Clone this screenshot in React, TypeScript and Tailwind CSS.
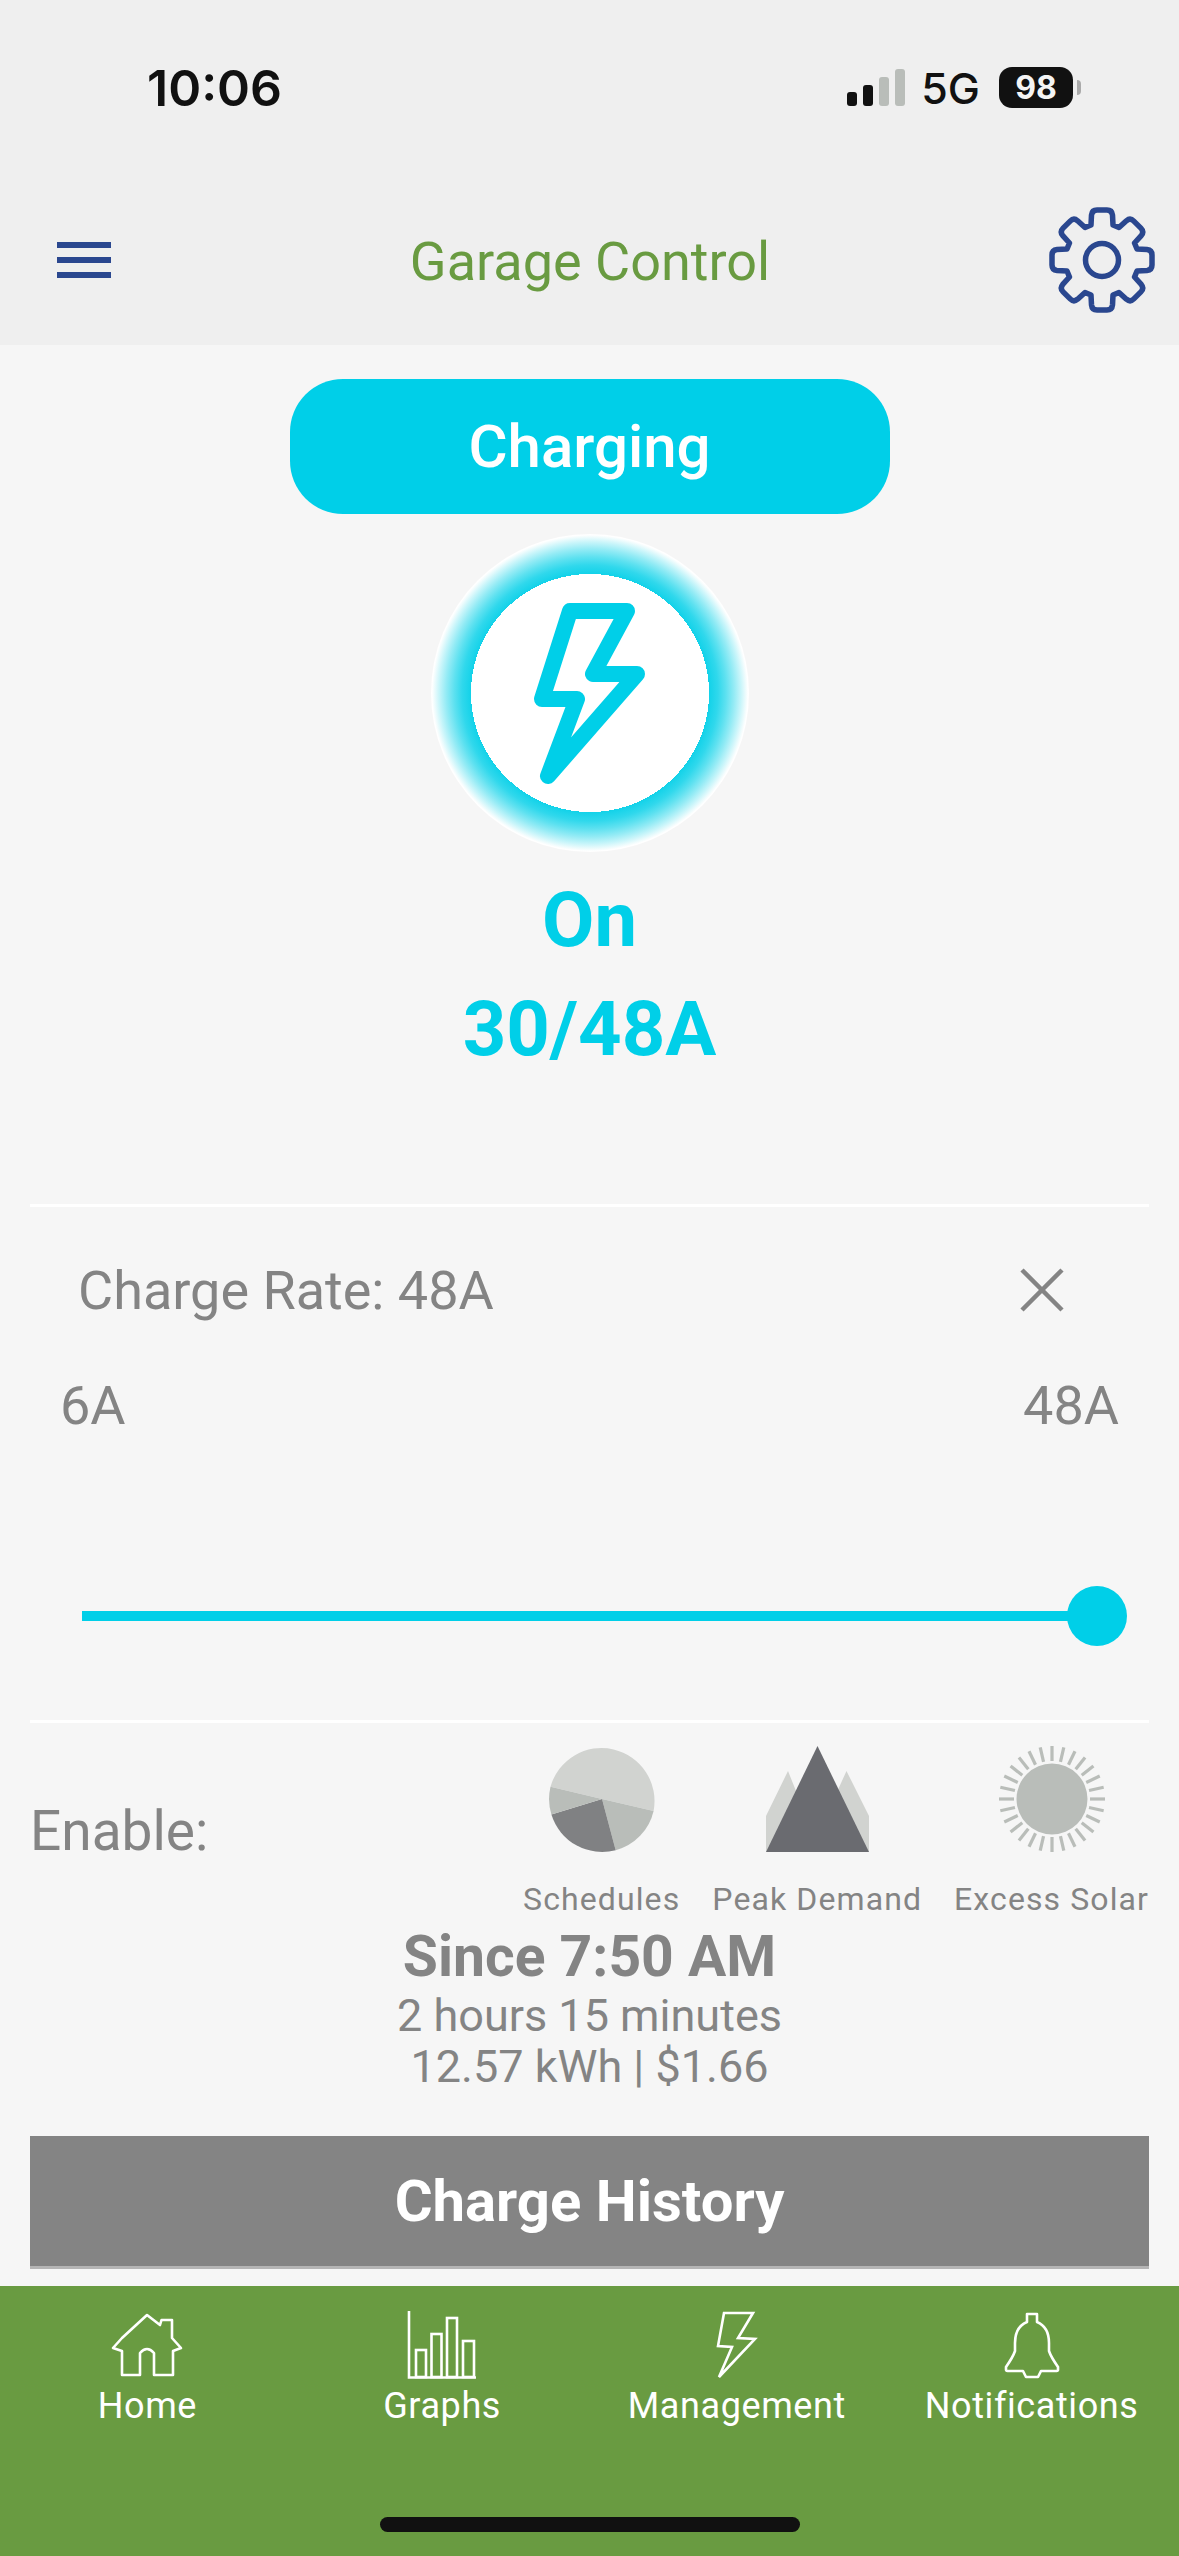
import { Fragment } from "react"

const gearPath = () => {
  const cx = 55
  const cy = 55
  let d = ""
  for (let i = 0; i < 8; i++) {
    const a = (i * Math.PI) / 4
    const pt = (x: number, y: number) => {
      const px = cx + x * Math.cos(a) - y * Math.sin(a)
      const py = cy + x * Math.sin(a) + y * Math.cos(a)
      return `${px.toFixed(2)} ${py.toFixed(2)}`
    }
    d += `${i === 0 ? "M" : "L"}${pt(-11, -35)} L${pt(-10.5, -45)} Q${pt(-10, -50)} ${pt(-5, -50)} L${pt(5, -50)} Q${pt(10, -50)} ${pt(10.5, -45)} L${pt(11, -35)} `
  }
  return d + "Z"
}

const sunRays = Array.from({ length: 28 }, (_, i) => (i * 360) / 28)

const Gear = () => (
  <svg width="110" height="110" viewBox="0 0 110 110" fill="none" stroke="#2a478f" strokeWidth="5.5" strokeLinejoin="round">
    <path d={gearPath()} />
    <circle cx="55" cy="55" r="16.5" />
  </svg>
)

const Pie = () => (
  <svg width="106" height="106" viewBox="-53 -53 106 106">
    <path d="M0 0L-51.5 -12.3A53 53 0 0 1 51.6 11.9Z" fill="#d1d3d0" />
    <path d="M0 0L51.6 11.9A53 53 0 0 1 13.7 51.2Z" fill="#b9bdb9" />
    <path d="M0 0L13.7 51.2A53 53 0 0 1 -50.6 15.6Z" fill="#808183" />
    <path d="M0 0L-50.6 15.6A53 53 0 0 1 -51.5 -12.3Z" fill="#b9bdb9" />
  </svg>
)

const Mountain = () => (
  <svg width="103" height="106" viewBox="0 0 103 106">
    <path d="M22 25L0 70V106H103V70L80.5 25L60 70H40Z" fill="#d1d3d0" />
    <path d="M51.5 0L0 106H103Z" fill="#6a6b70" />
  </svg>
)

const Sun = () => (
  <svg width="106" height="106" viewBox="-53 -53 106 106">
    <circle r="35.5" fill="#b9bdb9" />
    {sunRays.map((deg) => (
      <line key={deg} x1="0" y1="-38" x2="0" y2="-53" stroke="#b9bdb9" strokeWidth="3.2" transform={`rotate(${deg})`} />
    ))}
  </svg>
)

const tabs = [
  {
    label: "Home",
    icon: (
      <svg width="72" height="68" viewBox="-2 -2 72 66" fill="none" stroke="#fff" strokeWidth="2.6" strokeLinejoin="round">
        <path d="M34 1L47 11L48.5 6H59V24L68 34L60 37V61H41V39Q34 31 27 39V61H9V37L0 34L9 24Z" />
      </svg>
    ),
  },
  {
    label: "Graphs",
    icon: (
      <svg width="72" height="68" viewBox="0 0 72 68" fill="none" stroke="#fff" strokeWidth="2.6">
        <path d="M3 0V66.5H70" />
        <rect x="10" y="39" width="10" height="27" />
        <rect x="25.5" y="23" width="10" height="43" />
        <rect x="41" y="7" width="10" height="59" />
        <rect x="57" y="30" width="11" height="36" />
      </svg>
    ),
  },
  {
    label: "Management",
    icon: (
      <svg width="42" height="68" viewBox="0 0 42 68" fill="none" stroke="#fff" strokeWidth="2.6" strokeLinejoin="miter">
        <path d="M8 2H37L22 27L39 28L3 66L16 36L2 35Z" />
      </svg>
    ),
  },
  {
    label: "Notifications",
    icon: (
      <svg width="58" height="68" viewBox="0 0 58 68" fill="none" stroke="#fff" strokeWidth="2.6" strokeLinejoin="round">
        <path d="M24 3H34V11Q46 16 46 32V40Q48 46 55 56V59Q55 60 52 60H38L35 66H23L20 60H6Q3 60 3 59V56Q10 46 12 40V32Q12 16 24 11Z" />
      </svg>
    ),
  },
]

const modes = [
  { label: "Schedules", icon: <Pie /> },
  { label: "Peak Demand", icon: <Mountain /> },
  { label: "Excess Solar", icon: <Sun /> },
]

export default function App() {
  return (
    <div className="flex h-[2556px] w-[1179px] flex-col overflow-hidden bg-[#f6f6f6] font-['Roboto',sans-serif]">
      {/* Header */}
      <header className="h-[345px] shrink-0 bg-[#efefef]">
        <div className="box-content flex h-[69px] items-start pl-[147px] pr-[98px] pt-[60px]">
          <span className="font-['Inter',sans-serif] text-[50px] leading-[56px] font-semibold text-[#111]">10:06</span>
          <div className="ml-auto flex items-start pt-[9px]">
            <div className="flex items-end gap-[6px]">
              <span className="h-[14px] w-[10px] rounded-[3px] bg-[#111]" />
              <span className="h-[21px] w-[10px] rounded-[3px] bg-[#111]" />
              <span className="h-[29px] w-[10px] rounded-[3px] bg-[#b9bdb9]" />
              <span className="h-[37px] w-[10px] rounded-[3px] bg-[#b9bdb9]" />
            </div>
            <span className="ml-[16px] -mt-[6px] font-['Inter',sans-serif] text-[43px] leading-[50px] font-medium text-[#111]">5G</span>
            <div className="ml-[19px] -mt-[2px] flex h-[41px] w-[74px] items-center justify-center rounded-[13px] bg-[#111] font-['Inter',sans-serif] text-[32px] font-bold text-[#f4f4f4]">98</div>
            <span className="ml-[4px] mt-[11px] h-[15px] w-[4px] rounded-r-full bg-[#aaa]" />
          </div>
        </div>
        <div className="flex items-center pl-[57px] pr-[22px] pt-[76px]">
          <div className="flex w-[54px] flex-col gap-[9px]">
            <span className="h-[6px] bg-[#2a478f]" />
            <span className="h-[6px] bg-[#2a478f]" />
            <span className="h-[6px] bg-[#2a478f]" />
          </div>
          <h1 className="flex-1 pl-[22px] pt-[2px] text-center text-[54px] font-normal text-[#699b41]">Garage Control</h1>
          <Gear />
        </div>
      </header>

      {/* Status */}
      <main className="flex min-h-0 flex-1 flex-col px-[30px]">
        <button type="button" className="mx-auto mt-[34px] h-[135px] w-[600px] rounded-[53px] bg-[#00cfe8] text-[60px] font-medium text-white">
          Charging
        </button>
        <div className="mx-auto mt-[20px] flex h-[318px] w-[318px] items-center justify-center rounded-full bg-[radial-gradient(circle,#fff_119px,#12d2e9_119px,#30d8ec_128px,#5ee1f0_136px,#94ebf5_144px,#c8f5fa_151px,#f0fcfd_156px,#fff_158px)]">
          <svg width="120" height="185" viewBox="0 0 120 185" fill="none" stroke="#00cfe8" strokeWidth="16" strokeLinejoin="round">
            <path d="M40 10H97L63 73H107L18 175L47 98H12Z" />
          </svg>
        </div>
        <div className="mt-[14px] text-center text-[76px] leading-[109px] font-bold text-[#00cfe8]">
          <div>On</div>
          <div>30/48A</div>
        </div>

        {/* Charge rate */}
        <div className="mt-[120px] h-[3px] bg-white" />
        <div className="flex items-center justify-between pl-[48px] pr-[85px] pt-[52px]">
          <span className="text-[54px] leading-[64px] text-[#848484]">Charge Rate: 48A</span>
          <svg width="44" height="44" viewBox="0 0 44 44" stroke="#848484" strokeWidth="4.5" className="-mt-[2px]">
            <path d="M2 2L42 42M42 2L2 42" />
          </svg>
        </div>
        <div className="flex justify-between px-[30px] pt-[51px] text-[54px] leading-[64px] text-[#848484]">
          <span>6A</span>
          <span>48A</span>
        </div>
        <div className="relative mx-[52px] mt-[173px] h-[10px] bg-[#00cfe8]">
          <span className="absolute -right-[30px] -top-[25px] h-[60px] w-[60px] rounded-full bg-[#00cfe8]" />
        </div>

        {/* Enable */}
        <div className="mt-[99px] h-[3px] bg-white" />
        <div className="flex items-start justify-between pt-[23px]">
          <span className="pt-[53px] text-[55px] leading-[64px] text-[#848484]">Enable:</span>
          <div className="flex gap-[32px]">
            {modes.map((m) => (
              <Fragment key={m.label}>
                <div className="flex flex-col items-center gap-[28px]">
                  {m.icon}
                  <span className="text-[32px] leading-[38px] tracking-[1.1px] text-[#848484]">{m.label}</span>
                </div>
              </Fragment>
            ))}
          </div>
        </div>
        <div className="mt-[8px] flex flex-col items-center text-[#848484]">
          <span className="text-[57px] leading-[62px] font-bold">Since 7:50 AM</span>
          <span className="mt-[2px] text-[45px] leading-[51px]">2 hours 15 minutes</span>
          <span className="text-[45px] leading-[51px]">12.57 kWh | $1.66</span>
        </div>
        <button type="button" className="mt-[44px] h-[133px] border-b-[3px] border-[#b5b5b5] bg-[#848484] text-[58px] font-bold text-white">
          Charge History
        </button>
      </main>

      {/* Bottom tabs */}
      <footer className="relative h-[270px] shrink-0 bg-[#699b41] pt-[25px]">
        <nav className="grid grid-cols-4">
          {tabs.map((t) => (
            <div key={t.label} className="flex flex-col items-center">
              {t.icon}
              <span className="mt-[6px] text-[36px] leading-[42px] tracking-[0.6px] text-white">{t.label}</span>
            </div>
          ))}
        </nav>
        <span className="absolute bottom-[24px] left-[380px] h-[15px] w-[420px] rounded-full bg-[#111]" />
      </footer>
    </div>
  )
}
